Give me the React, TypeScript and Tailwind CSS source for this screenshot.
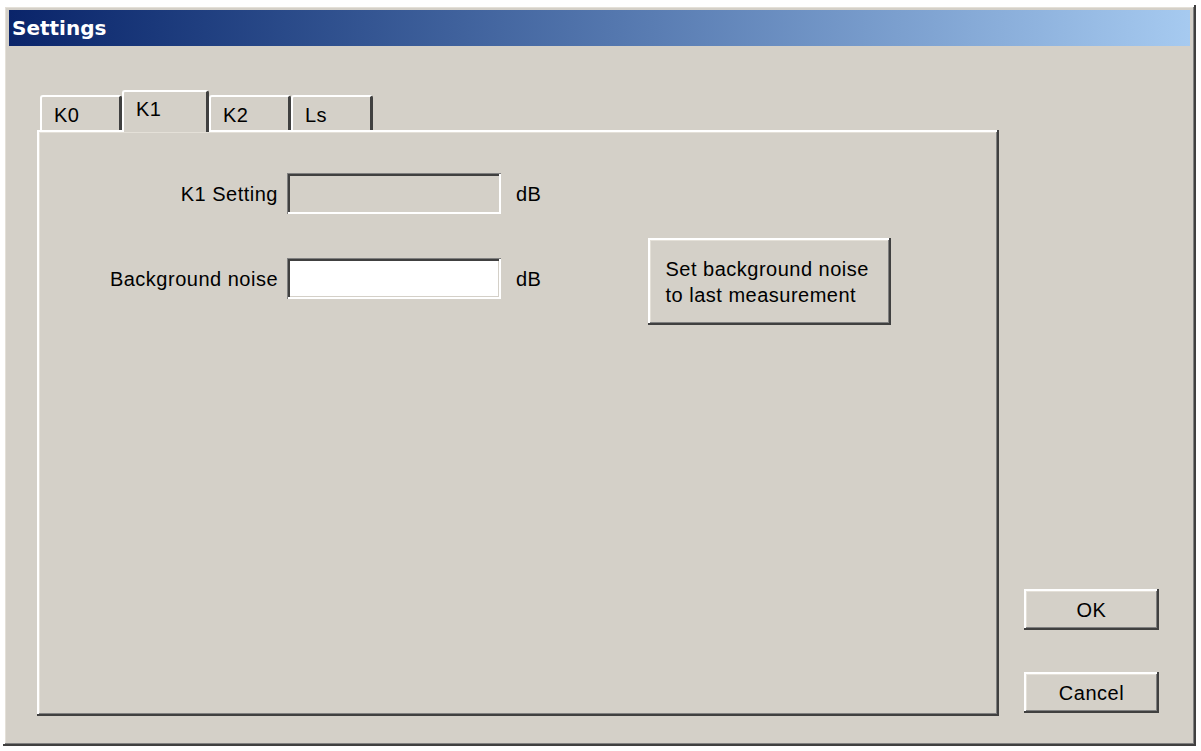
const raised =
  "shadow-[inset_-2px_-2px_#404040,inset_2px_2px_#ffffff,inset_-3px_-3px_#808080,inset_3px_3px_#e4e0d8]";
const sunken =
  "shadow-[inset_1px_1px_#808080,inset_-2px_-2px_#ffffff,inset_3px_3px_#404040,inset_-3px_-3px_#d4d0c8]";

const font = "font-['Liberation_Sans',Arial,sans-serif] text-[20px] tracking-[0.5px] text-black";

function Tab({ label, active, width }: { label: string; active?: boolean; width: string }) {
  return (
    <div
      className={`${width} ${
        active
          ? "relative z-10 -mb-[2px] h-[42px] pt-[5px]"
          : "h-[35px] pt-[6px]"
      } rounded-t-[3px] border-t-2 border-l-2 border-r-[3px] border-t-white border-l-white border-r-[#404040] bg-[#d4d0c8] pl-[12px] leading-[24px]`}
    >
      {label}
    </div>
  );
}

function Field({ label, disabled }: { label: string; disabled?: boolean }) {
  return (
    <div className="flex items-center">
      <div className="w-[243px] pr-[2px] text-right">{label}</div>
      <div
        className={`ml-[7px] h-[41px] w-[214px] ${sunken} ${
          disabled ? "bg-[#d4d0c8]" : "bg-white"
        }`}
      />
      <div className="ml-[15px]">dB</div>
    </div>
  );
}

function Button({ children, className }: { children: React.ReactNode; className?: string }) {
  return (
    <button className={`bg-[#d4d0c8] ${raised} ${className ?? ""}`}>{children}</button>
  );
}

export default function App() {
  return (
    <div className={`h-[751px] w-[1201px] overflow-hidden bg-white ${font}`}>
      <div
        className={`ml-[3px] mt-[5px] flex h-[741px] w-[1193px] flex-col bg-[#d4d0c8] px-[6px] pt-[5px] ${raised}`}
      >
        {/* title bar */}
        <div className="flex h-[36px] items-center bg-gradient-to-r from-[#0a246a] to-[#a6caf0] pl-[3px] font-['DejaVu_Sans',Verdana,sans-serif] text-[20px] font-bold tracking-normal text-white">
          Settings
        </div>

        <div className="flex items-end pl-[28px] pt-[44px]">
          <div className="flex w-[962px] flex-col">
            <div className="flex items-end pl-[3px]">
              <Tab label="K0" width="w-[82px]" />
              <Tab label="K1" width="w-[87px]" active />
              <Tab label="K2" width="w-[82px]" />
              <Tab label="Ls" width="w-[82px]" />
            </div>
            <div className={`flex h-[586px] items-start ${raised}`}>
              <div className="flex flex-col gap-[44px] pt-[43px]">
                <Field label="K1 Setting" disabled />
                <Field label="Background noise" />
              </div>
              <Button className="ml-[107px] mt-[108px] h-[87px] w-[243px] pl-[17px] text-left leading-[26px]">
                Set background noise
                <br />
                to last measurement
              </Button>
            </div>
          </div>

          <div className="mb-[3px] ml-[25px] flex flex-col gap-[42px]">
            <Button className="h-[41px] w-[135px]">OK</Button>
            <Button className="h-[41px] w-[135px]">Cancel</Button>
          </div>
        </div>
      </div>
    </div>
  );
}
